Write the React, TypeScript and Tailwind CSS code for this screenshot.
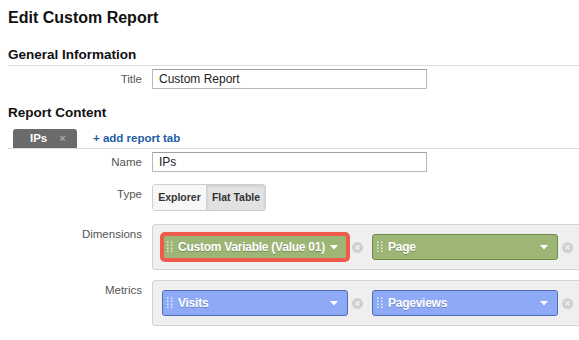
import React from 'react'

const font = { fontFamily: '"Liberation Sans", Arial, sans-serif' }

const Grip = () => (
  <svg width="6" height="12" viewBox="0 0 6 12" className="shrink-0">
    {[0, 1, 2, 3].map((r) =>
      [0, 1].map((c) => (
        <rect key={`${r}-${c}`} x={c * 4} y={r * 3 + 0.5} width="1.5" height="1.5" fill="rgba(255,255,255,0.75)" />
      ))
    )}
  </svg>
)

const Caret = () => (
  <svg width="8" height="5" viewBox="0 0 8 5" className="shrink-0">
    <path d="M0 0 L8 0 L4 4.5 Z" fill="#ffffff" />
  </svg>
)

const Remove = () => (
  <span className="w-[11px] h-[11px] rounded-full bg-[#cfcfcf] flex items-center justify-center shrink-0">
    <svg width="5" height="5" viewBox="0 0 5 5">
      <path d="M0.5 0.5 L4.5 4.5 M4.5 0.5 L0.5 4.5" stroke="#f2f2f2" strokeWidth="1.3" />
    </svg>
  </span>
)

const Chip = ({ label, color, highlight }: { label: string; color: 'green' | 'blue'; highlight?: boolean }) => {
  const tone =
    color === 'green'
      ? 'bg-[#9db676] border-[#6d8a48]'
      : 'bg-[#8eaaf6] border-[#4f6cb8]'
  return (
    <div
      className={`w-[186px] h-[26px] shrink-0 border rounded-[3px] flex items-center pl-[4px] pr-[9px] ${tone} ${
        highlight ? 'outline-[4px] outline-solid outline-[#ef5b4b] outline-offset-[-2px]' : ''
      }`}
    >
      <Grip />
      <span
        className="ml-[5px] flex-1 min-w-0 whitespace-nowrap text-white font-bold text-[12px] tracking-[-0.25px]"
        style={{ textShadow: '0 1px 0 rgba(0,0,0,0.25)' }}
      >
        {label}
      </span>
      <Caret />
    </div>
  )
}

const Label = ({ children, top }: { children: React.ReactNode; top?: boolean }) => (
  <div
    className={`w-[134px] mr-[10px] shrink-0 text-right text-[11.5px] leading-[14px] text-[#555] ${
      top ? 'self-start pt-[3px]' : ''
    }`}
  >
    {children}
  </div>
)

const TextInput = ({ value }: { value: string }) => (
  <div className="w-[275px] h-[20px] border border-[#b8b8b8] border-t-[#a0a0a0] bg-white flex items-center px-[6px] text-[12px] text-[#222]">
    {value}
  </div>
)

const DropBox = ({ children }: { children: React.ReactNode }) => (
  <div className="flex-1 bg-[#efefef] border border-r-0 border-[#d2d2d2] rounded-l-[4px] p-[9px] flex items-center">
    {children}
  </div>
)

export default function App() {
  return (
    <div className="w-[579px] h-[340px] overflow-hidden bg-white pl-2" style={font}>
      <h1 className="mt-[8px] text-[16px] leading-[20px] font-bold text-[#111]">Edit Custom Report</h1>

      <h2 className="mt-[18px] text-[13.5px] leading-[18px] font-bold text-[#111] border-b border-[#dcdcdc] pb-[1px]">
        General Information
      </h2>
      <div className="mt-[3px] flex items-center">
        <Label>Title</Label>
        <TextInput value="Custom Report" />
      </div>

      <h2 className="mt-[15px] text-[13.5px] leading-[18px] font-bold text-[#111]">Report Content</h2>
      <div className="mt-[7px] flex items-end border-b border-[#dcdcdc] pl-[5px]">
        <div className="w-[64px] h-[19px] bg-[#6b6b6b] rounded-t-[3px] flex items-center pl-[17px] gap-[12px]">
          <span className="text-white font-bold text-[11.5px]">IPs</span>
          <span className="text-[#a9a9a9] font-bold text-[11px]">×</span>
        </div>
        <a className="ml-[16px] mb-[3px] text-[#1d5ea5] font-bold text-[11.5px] leading-[14px]">+ add report tab</a>
      </div>

      <div className="mt-[3px] flex items-center">
        <Label>Name</Label>
        <TextInput value="IPs" />
      </div>

      <div className="mt-[12px] flex">
        <Label top>Type</Label>
        <div className="h-[27px] flex border border-[#cfcfcf] rounded-[3px] overflow-hidden text-[10.5px] font-bold text-[#333]">
          <div className="w-[53px] bg-[#f7f7f7] flex items-center justify-center">Explorer</div>
          <div
            className="w-[59px] bg-[#e2e2e2] border-l border-[#cfcfcf] flex items-center justify-center"
            style={{ boxShadow: 'inset 0 1px 3px rgba(0,0,0,0.12)' }}
          >
            Flat Table
          </div>
        </div>
      </div>

      <div className="mt-[13px] flex">
        <Label top>Dimensions</Label>
        <DropBox>
          <Chip label="Custom Variable (Value 01)" color="green" highlight />
          <div className="ml-[4px] mr-[9px]"><Remove /></div>
          <Chip label="Page" color="green" />
          <div className="ml-[4px]"><Remove /></div>
        </DropBox>
      </div>

      <div className="mt-[10px] flex">
        <Label top>Metrics</Label>
        <DropBox>
          <Chip label="Visits" color="blue" />
          <div className="ml-[4px] mr-[9px]"><Remove /></div>
          <Chip label="Pageviews" color="blue" />
          <div className="ml-[4px]"><Remove /></div>
        </DropBox>
      </div>
    </div>
  )
}
